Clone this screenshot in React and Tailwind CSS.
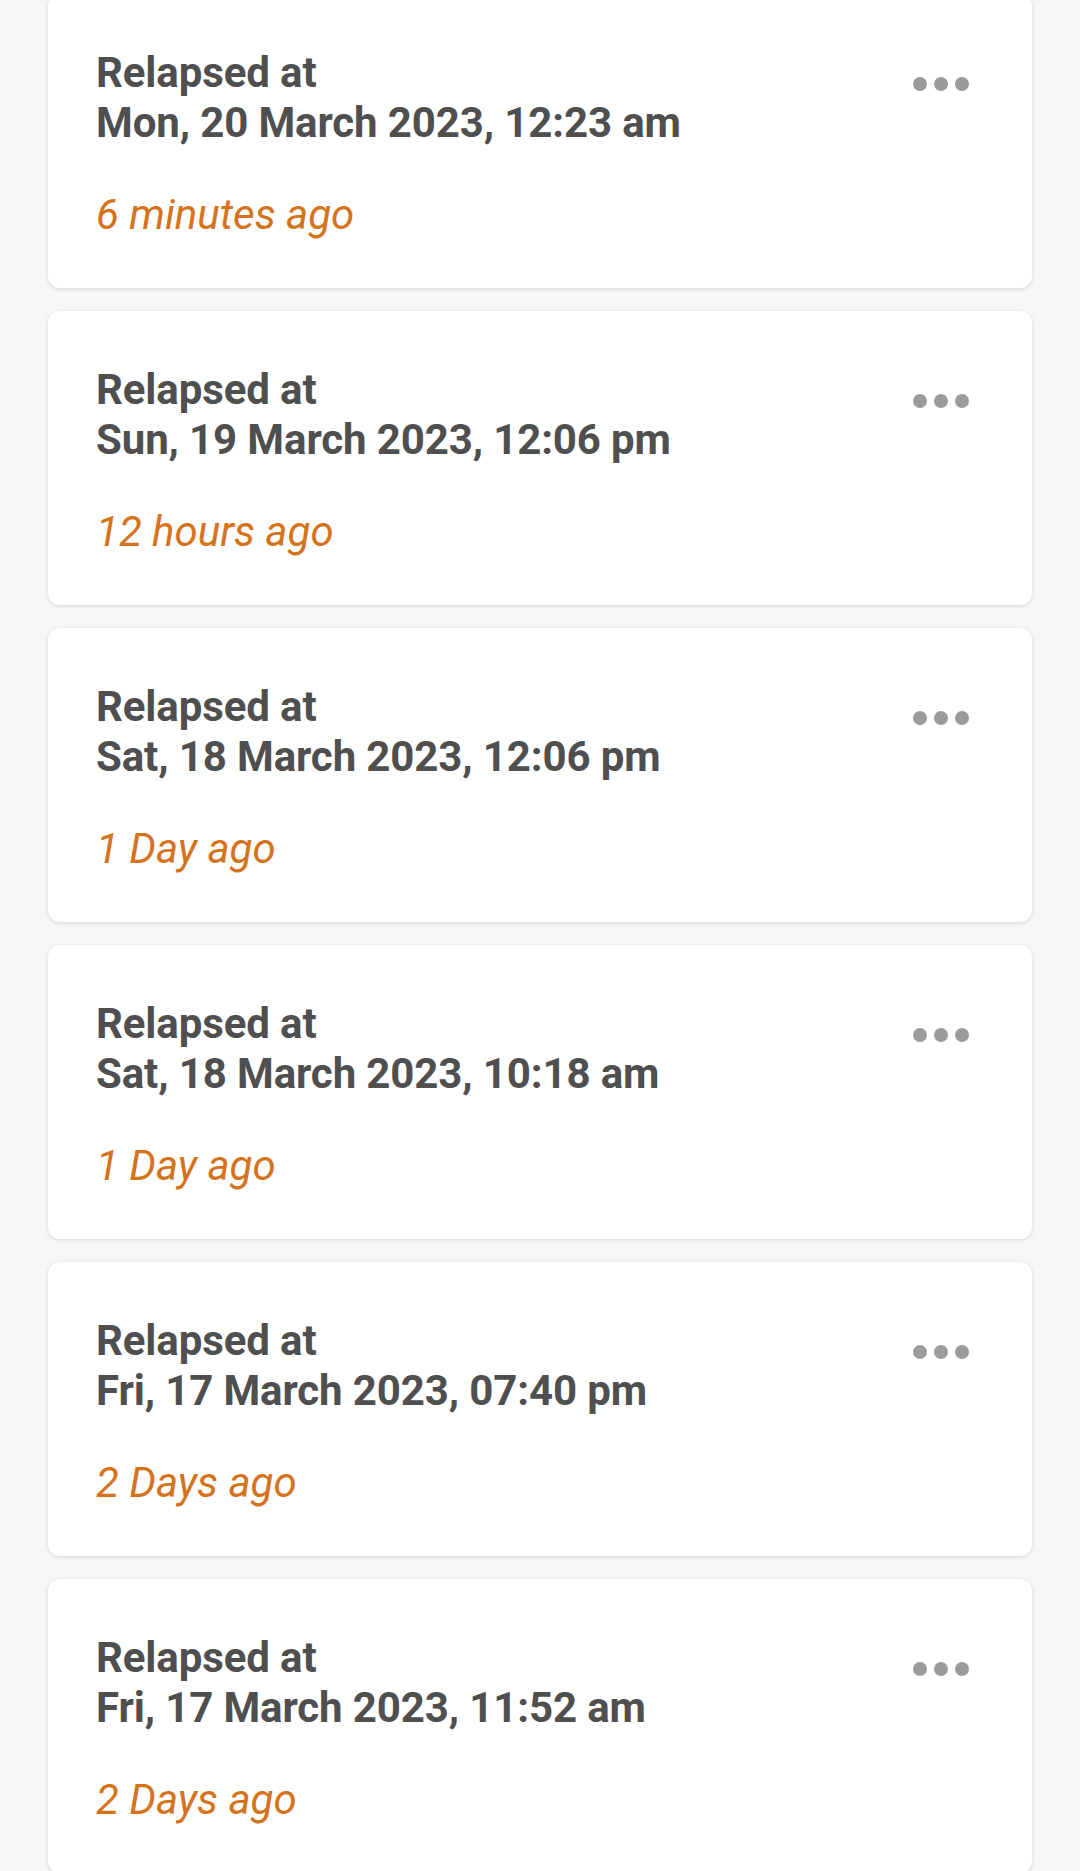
import React from 'react';

const relapses = [
  { date: 'Mon, 20 March 2023, 12:23 am', ago: '6 minutes ago' },
  { date: 'Sun, 19 March 2023, 12:06 pm', ago: '12 hours ago' },
  { date: 'Sat, 18 March 2023, 12:06 pm', ago: '1 Day ago' },
  { date: 'Sat, 18 March 2023, 10:18 am', ago: '1 Day ago' },
  { date: 'Fri, 17 March 2023, 07:40 pm', ago: '2 Days ago' },
  { date: 'Fri, 17 March 2023, 11:52 am', ago: '2 Days ago' },
];

const MoreDots = () => (
  <div className="flex gap-[7px] mt-[29px] mr-[15px]">
    <span className="w-[14px] h-[14px] rounded-full bg-[#9b9b9b]" />
    <span className="w-[14px] h-[14px] rounded-full bg-[#9b9b9b]" />
    <span className="w-[14px] h-[14px] rounded-full bg-[#9b9b9b]" />
  </div>
);

const RelapseCard = ({ date, ago }) => {
  return (
    <div className="bg-white rounded-[12px] shadow-[0_1px_4px_rgba(0,0,0,0.14)] pl-[48px] pr-[48px] pt-[54px] pb-[48px] flex justify-between items-start">
      <div>
        <p className="text-[42px] leading-[50px] font-bold tracking-[-0.12px] text-[#4f4f4f]">Relapsed at</p>
        <p className="text-[42px] leading-[50px] font-bold tracking-[-0.12px] text-[#4f4f4f]">{date}</p>
        <p className="mt-[42px] text-[42px] leading-[50px] italic text-[#d5731d]">{ago}</p>
      </div>
      <MoreDots />
    </div>
  );
};

const App = () => {
  return (
    <div
      className="h-[1871px] overflow-hidden bg-[#f7f7f7]"
      style={{ fontFamily: 'Roboto, "Noto Sans", sans-serif' }}
    >
      <div className="flex flex-col gap-[23px] px-[48px] -mt-[6px]">
        {relapses.map((r, i) => (
          <RelapseCard key={i} date={r.date} ago={r.ago} />
        ))}
      </div>
    </div>
  );
};

export default App;
